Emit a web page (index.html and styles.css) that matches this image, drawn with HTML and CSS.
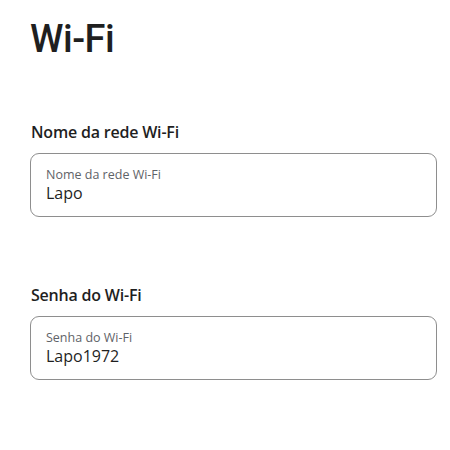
FILE: index.html
```html
<!DOCTYPE html>
<html lang="pt">
<head>
<meta charset="utf-8">
<link rel="stylesheet" href="styles.css">
</head>
<body>
<main class="page">
  <h1 class="title">Wi-Fi</h1>
  <section class="field">
    <h2 class="field-heading">Nome da rede Wi-Fi</h2>
    <div class="box">
      <span class="box-label">Nome da rede Wi-Fi</span>
      <span class="box-value">Lapo</span>
    </div>
  </section>
  <section class="field field-second">
    <h2 class="field-heading">Senha do Wi-Fi</h2>
    <div class="box">
      <span class="box-label">Senha do Wi-Fi</span>
      <span class="box-value">Lapo1972</span>
    </div>
  </section>
</main>
</body>
</html>
```
FILE: styles.css
```css
html, body {
  margin: 0;
  padding: 0;
  background: #ffffff;
}
body {
  font-family: "Open Sans", "Noto Sans", sans-serif;
  color: #1f1f1f;
}
.page {
  width: 450px;
  height: 450px;
  padding: 0 13px 0 30px;
  box-sizing: border-box;
}
.title {
  margin: 0;
  padding-top: 16px;
  font-family: Roboto, "Open Sans", sans-serif;
  font-size: 38px;
  line-height: 46px;
  font-weight: 500;
  letter-spacing: -0.5px;
}
.field {
  margin-top: 59px;
}
.field-second {
  margin-top: 67px;
}
.field-heading {
  margin: 0 0 0 1px;
  font-size: 16px;
  line-height: 22px;
  font-weight: 600;
  letter-spacing: -0.2px;
}
.box {
  margin-top: 10px;
  height: 64px;
  box-sizing: border-box;
  border: 1px solid #8e8e8e;
  border-radius: 9px;
  padding: 13px 15px 0 15px;
  display: flex;
  flex-direction: column;
}
.box-label {
  font-size: 12.5px;
  line-height: 15px;
  color: #5f6368;
}
.box-value {
  font-size: 16px;
  line-height: 22px;
  color: #1f1f1f;
}
```
